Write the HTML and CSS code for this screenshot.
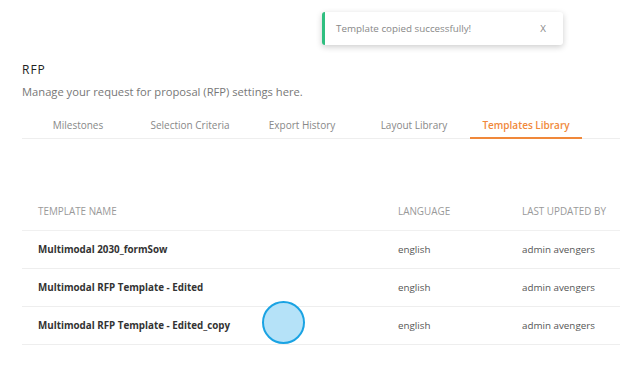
FILE: index.html
```html
<html lang="en">
<head>
    <meta charset="UTF-8">
    <meta name="viewport" content="width=device-width, initial-scale=1.0">
    <title>RFP</title>
    <link rel="stylesheet" href="styles.css">
</head>
<body>
    <div class="toast">
      <span class="toast-text">Template copied successfully!</span>
      <span class="toast-close">X</span>
    </div>
    <div class="page">
      <h1 class="title">RFP</h1>
      <p class="subtitle">Manage your request for proposal (RFP) settings here.</p>
      <div class="tabs">
        <a class="tab">Milestones</a>
        <a class="tab">Selection Criteria</a>
        <a class="tab">Export History</a>
        <a class="tab">Layout Library</a>
        <a class="tab active">Templates Library</a>
      </div>
      <table class="templates">
        <thead>
          <tr>
            <th class="col-name">Template Name</th>
            <th class="col-lang">Language</th>
            <th class="col-user">Last Updated By</th>
          </tr>
        </thead>
        <tbody>
          <tr>
            <td class="col-name">Multimodal 2030_formSow</td>
            <td>english</td>
            <td>admin avengers</td>
          </tr>
          <tr>
            <td class="col-name">Multimodal RFP Template - Edited</td>
            <td>english</td>
            <td>admin avengers</td>
          </tr>
          <tr>
            <td class="col-name">Multimodal RFP Template - Edited_copy</td>
            <td>english</td>
            <td>admin avengers</td>
          </tr>
        </tbody>
      </table>
    </div>
    <!-- click marker -->
    <div class="cursor"></div>
</body>
</html>
```

FILE: styles.css
```css
* {
  box-sizing: border-box;
}

body {
  margin: 0;
  font-family: "Open Sans", "Liberation Sans", sans-serif;
  background: #fff;
  color: #333;
}

.page {
  padding: 58px 24px 0 22px;
}

.title {
  margin: 0;
  font-size: 12px;
  font-weight: 400;
  letter-spacing: 1px;
  color: #222;
  line-height: 24px;
}

.subtitle {
  margin: 0;
  font-size: 11.2px;
  color: #777;
  line-height: 20px;
}

.tabs {
  display: flex;
  margin-top: 12px;
  border-bottom: 1px solid #eee;
  padding-left: 0;
}

.tab {
  width: 112px;
  text-align: center;
  font-size: 10px;
  color: #888;
  line-height: 22px;
  padding-bottom: 1px;
  border-bottom: 2px solid transparent;
  margin-bottom: -1px;
}

.tab.active {
  color: #f0883a;
  font-weight: 600;
  border-bottom-color: #f0883a;
}

.templates {
  width: 100%;
  margin-top: 53px;
  border-collapse: collapse;
}

.templates th {
  text-align: left;
  font-weight: 400;
  font-size: 9.9px;
  text-transform: uppercase;
  color: #999;
  height: 38px;
  padding: 0;
  border-bottom: 1px solid #f0f0f0;
}

.templates td {
  font-size: 9.8px;
  color: #555;
  height: 38px;
  padding: 0;
  border-bottom: 1px solid #eee;
}

.templates .col-name {
  padding-left: 16px;
  width: 376px;
}

.templates td.col-name {
  font-weight: 700;
  color: #333;
}

.templates .col-lang {
  width: 124px;
}

.toast {
  position: absolute;
  top: 12px;
  left: 322px;
  width: 241px;
  height: 33px;
  display: flex;
  align-items: center;
  justify-content: space-between;
  padding: 0 17px 0 11px;
  background: #fff;
  border-left: 3px solid #2fbf80;
  border-radius: 3px;
  box-shadow: 0 2px 6px rgba(0,0,0,0.2);
  font-size: 9.8px;
  color: #888;
}

.cursor {
  position: absolute;
  left: 262px;
  top: 301px;
  width: 43px;
  height: 43px;
  border-radius: 50%;
  background: #b5e2f8;
  border: 2px solid #1aa3e3;
}
```
